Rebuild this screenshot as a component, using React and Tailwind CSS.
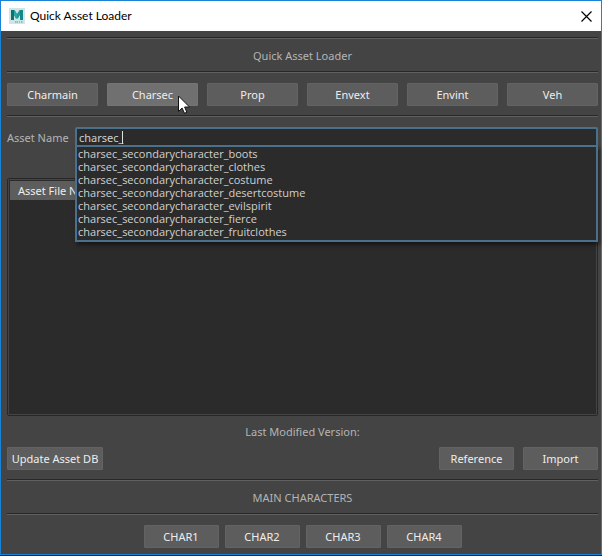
import { useState } from "react";

const categories = ["Charmain", "Charsec", "Prop", "Envext", "Envint", "Veh"];
const characters = ["CHAR1", "CHAR2", "CHAR3", "CHAR4"];
const suggestions = [
  "charsec_secondarycharacter_boots",
  "charsec_secondarycharacter_clothes",
  "charsec_secondarycharacter_costume",
  "charsec_secondarycharacter_desertcostume",
  "charsec_secondarycharacter_evilspirit",
  "charsec_secondarycharacter_fierce",
  "charsec_secondarycharacter_fruitclothes",
];

function Separator() {
  return <hr className="h-[2px] shrink-0 border-0 border-t border-b border-t-[#272727] border-b-[#606060]" />;
}

function Button({ children, className = "", active = false }) {
  return (
    <button
      type="button"
      className={`h-[23px] rounded-[1px] border text-center whitespace-nowrap text-[#eeeeee] ${
        active ? "border-[#747474] bg-[#707070]" : "border-[#636363] bg-[#5d5d5d]"
      } ${className}`}
    >
      {children}
    </button>
  );
}

function MayaIcon() {
  return (
    <svg className="h-4 w-4" viewBox="0 0 16 16" aria-hidden="true">
      <rect width="16" height="16" fill="#cfe6e8" />
      <path d="M2 2h3.500l2.500 4 2.500-4H14v10h-3V7l-2 3.500H7L5 7v5H2z" fill="#1d9a97" />
      <path d="M2 2h3v10H2z" fill="#12706f" />
      <path d="M5.500 2L8 6v4.500H7L5 7V2z" fill="#2aa7a1" />
      <path d="M11 2h3v10h-3z" fill="#168783" />
      <path d="M6 14h1.500M8 14h1M10 14h1M12 14h1.500" stroke="#61bdbb" strokeWidth="1.500" />
    </svg>
  );
}

function Pointer() {
  return (
    <svg className="pointer-events-none absolute top-[12px] left-[71px] z-20 h-[19px] w-[12px]" viewBox="0 0 12 19" aria-hidden="true">
      <path d="M.5 1v15.500l3.600-3.500 2.400 5.300 2.400-1-2.300-5.300h4.900z" fill="#fff" stroke="#111" />
    </svg>
  );
}

export default function App() {
  const [name, setName] = useState("charsec_");

  return (
    <div className="min-h-screen bg-[#252525] pb-px font-['Noto_Sans',sans-serif] text-[11px] leading-[13px] text-[#b4b4b4]">
      <div className="flex min-h-[calc(100vh-1px)] flex-col border border-[#1883d7] bg-[#444444]">
        <header className="flex h-[30px] shrink-0 items-center bg-white pr-[9px] pl-2 text-black">
          <MayaIcon />
          <h1 className="ml-[5px] flex-1 font-['Lato',sans-serif] text-[12px] leading-4">Quick Asset Loader</h1>
          <button type="button" aria-label="Close" className="flex h-4 w-3 items-center justify-center">
            <svg className="h-[11px] w-[11px]" viewBox="0 0 11 11" fill="none" stroke="#000" strokeWidth="1.200">
              <path d="M.5.5l10 10M10.500.5l-10 10" />
            </svg>
          </button>
        </header>

        <main className="flex flex-1 flex-col px-[6px] pt-[6px] pr-[3px] pb-[6px]">
          <Separator />
          <h2 className="flex h-8 items-center justify-center">Quick Asset Loader</h2>
          <Separator />

          <nav className="mt-[10px] mb-[9px] grid grid-cols-6 gap-[9px]">
            {categories.map((category) => (
              <div key={category} className="relative flex">
                <Button className="flex-1" active={category === "Charsec"}>{category}</Button>
                {category === "Charsec" && <Pointer />}
              </div>
            ))}
          </nav>
          <Separator />

          <div className="mt-[10px] flex items-center">
            <label htmlFor="asset-name" className="w-[68px] shrink-0">Asset Name</label>
            <div className="relative flex-1">
              <input
                id="asset-name"
                type="text"
                value={name}
                onChange={(event) => setName(event.target.value)}
                className="block h-5 w-full rounded-[2px] border-2 border-[#4b708c] bg-[#2b2b2b] px-[2px] text-[#d0d0d0] outline-none"
              />
              <span className="absolute top-1 left-[47px] h-[13px] w-px bg-[#e0e0e0]" />
              <ul
                role="listbox"
                aria-label="Matching assets"
                className="absolute top-[18px] right-0 left-0 z-10 border-2 border-[#4b708c] bg-[#2b2b2b] pb-[2px] pl-px font-['Open_Sans',sans-serif] text-[#d0d0d0] shadow-[2px_3px_4px_rgba(0,0,0,0.5)]"
              >
                {suggestions.map((item) => (
                  <li key={item} role="option" aria-selected="false">{item}</li>
                ))}
              </ul>
            </div>
          </div>

          <div className="mt-[31px] flex flex-1 flex-col rounded-[2px] border border-[#272727] bg-[#444444] p-px">
            <div className="flex-1 bg-[#2b2b2b] p-px">
              <table className="w-full border-collapse">
                <thead>
                  <tr className="h-[19px] bg-[#5d5d5d] text-left text-[#eeeeee]">
                    <th className="px-2 font-normal">Asset File Name</th>
                  </tr>
                </thead>
              </table>
            </div>
          </div>

          <p className="flex h-[31px] items-center justify-center">Last Modified Version:</p>
          <div className="mb-[9px] flex gap-[9px]">
            <Button className="mr-auto w-24">Update Asset DB</Button>
            <Button className="w-[75px]">Reference</Button>
            <Button className="w-[75px]">Import</Button>
          </div>
          <Separator />
          <h2 className="flex h-8 items-center justify-center">MAIN CHARACTERS</h2>
          <Separator />
          <div className="mt-[10px] flex justify-center gap-[6px]">
            {characters.map((character) => (
              <Button key={character} className="w-[75px]">{character}</Button>
            ))}
          </div>
        </main>
      </div>
    </div>
  );
}
